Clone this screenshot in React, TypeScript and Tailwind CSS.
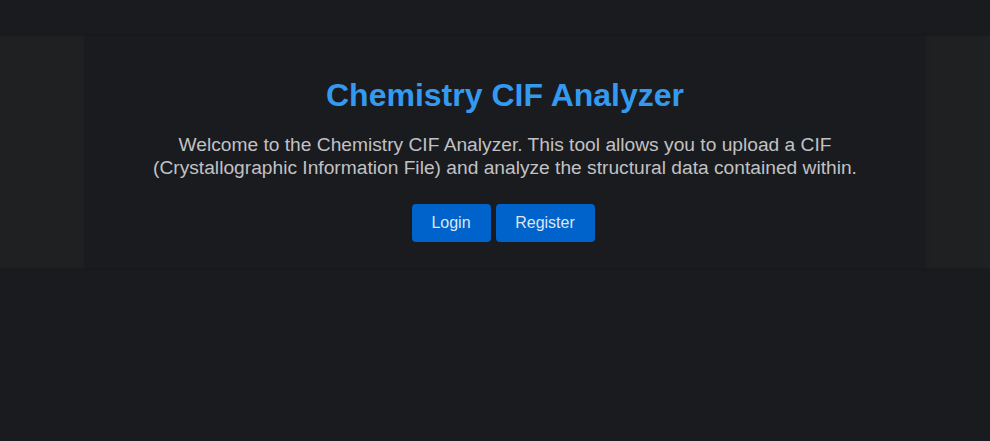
import React from 'react';

const App: React.FC = () => {
  return (
    <div className="min-h-[441px] w-full bg-[#1a1b1e] pt-[36px] font-['Liberation_Sans',Arial,sans-serif]">
      {/* Hero band */}
      <div className="h-[232px] w-full bg-[#1f2022]">
        <div className="ml-[85px] flex h-full w-[840px] flex-col items-center bg-[#1a1b1e] pt-[40px] shadow-[0_0_4px_rgba(0,0,0,0.25)]">
          <h1 className="text-[32px] font-bold leading-[38px] text-[#339af0]">
            Chemistry CIF Analyzer
          </h1>
          <p className="mt-[19px] text-center text-[19.2px] leading-[23px] text-[#c1c2c5]">
            Welcome to the Chemistry CIF Analyzer. This tool allows you to upload a CIF
            <br />
            (Crystallographic Information File) and analyze the structural data contained within.
          </p>
          <div className="mt-[25px] mr-[4px] flex gap-[5px]">
            <button className="h-[38px] w-[79px] rounded-[4px] bg-[#0063cc] text-[16px] text-[#dde6f0]">
              Login
            </button>
            <button className="h-[38px] w-[99px] rounded-[4px] bg-[#0063cc] text-[16px] text-[#dde6f0]">
              Register
            </button>
          </div>
        </div>
      </div>
    </div>
  );
};

export default App;
